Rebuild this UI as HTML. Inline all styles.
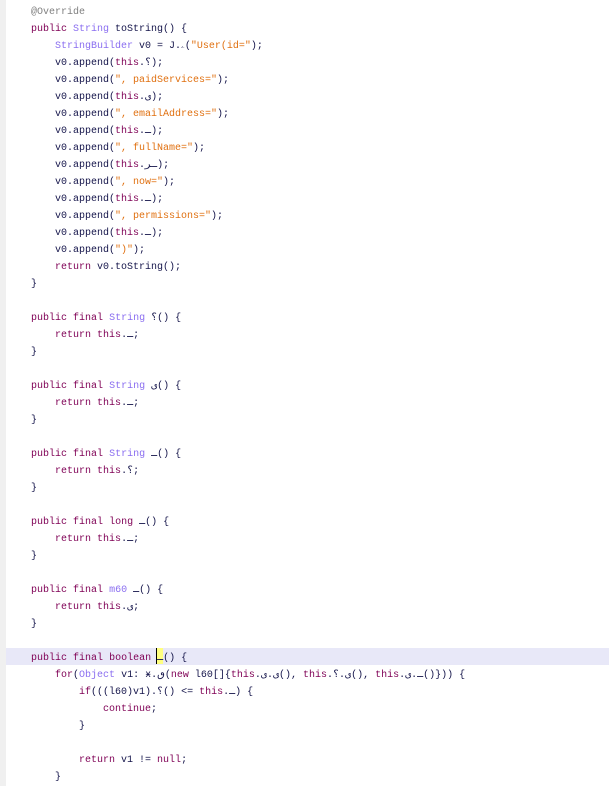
<!DOCTYPE html>
<html><head><meta charset="utf-8"><style>
html,body{margin:0;padding:0;background:#fff;width:609px;height:786px;overflow:hidden;position:relative}
.gut{position:absolute;left:0;top:0;width:6px;height:786px;background:#f0f0f0}
.hl{position:absolute;left:6px;top:648px;width:603px;height:17px;background:#e8e8f8}
.cur{position:absolute;left:156px;top:648px;width:6px;height:16px;background:#ffff80;border-left:1px solid #000}
pre{position:absolute;left:31px;top:4px;margin:0;font-family:"Liberation Mono","DejaVu Sans Mono",monospace;font-size:10px;line-height:17px;color:#14144a;letter-spacing:0}
.k{color:#7f0055}.t{color:#8a6ef0}.s{color:#e07010}.a{color:#808080}
</style></head><body>
<div class="gut"></div><div class="hl"></div><div class="cur"></div>
<pre><span class="a">@Override</span>
<span class="k">public</span> <span class="t">String</span> toString() {
    <span class="t">StringBuilder</span> v0 = J.ۦ(<span class="s">"User(id="</span>);
    v0.append(<span class="k">this</span>.؟);
    v0.append(<span class="s">", paidServices="</span>);
    v0.append(<span class="k">this</span>.ی);
    v0.append(<span class="s">", emailAddress="</span>);
    v0.append(<span class="k">this</span>.ـ);
    v0.append(<span class="s">", fullName="</span>);
    v0.append(<span class="k">this</span>.ـر);
    v0.append(<span class="s">", now="</span>);
    v0.append(<span class="k">this</span>.ـ);
    v0.append(<span class="s">", permissions="</span>);
    v0.append(<span class="k">this</span>.ـ);
    v0.append(<span class="s">")"</span>);
    <span class="k">return</span> v0.toString();
}

<span class="k">public</span> <span class="k">final</span> <span class="t">String</span> ؟() {
    <span class="k">return</span> <span class="k">this</span>.ـ;
}

<span class="k">public</span> <span class="k">final</span> <span class="t">String</span> ی() {
    <span class="k">return</span> <span class="k">this</span>.ـ;
}

<span class="k">public</span> <span class="k">final</span> <span class="t">String</span> ـ() {
    <span class="k">return</span> <span class="k">this</span>.؟;
}

<span class="k">public</span> <span class="k">final</span> <span class="k">long</span> ـ() {
    <span class="k">return</span> <span class="k">this</span>.ـ;
}

<span class="k">public</span> <span class="k">final</span> <span class="t">m60</span> ـ() {
    <span class="k">return</span> <span class="k">this</span>.ی;
}

<span class="k">public</span> <span class="k">final</span> <span class="k">boolean</span> ـ() {
    <span class="k">for</span>(<span class="t">Object</span> v1: ӿ.ٯ(<span class="k">new</span> l60[]{<span class="k">this</span>.ی.ی(), <span class="k">this</span>.ی.؟(), <span class="k">this</span>.ـ.ی()})) {
        <span class="k">if</span>(((l60)v1).؟() &lt;= <span class="k">this</span>.ـ) {
            <span class="k">continue</span>;
        }

        <span class="k">return</span> v1 != <span class="k">null</span>;
    }</pre>
</body></html>
